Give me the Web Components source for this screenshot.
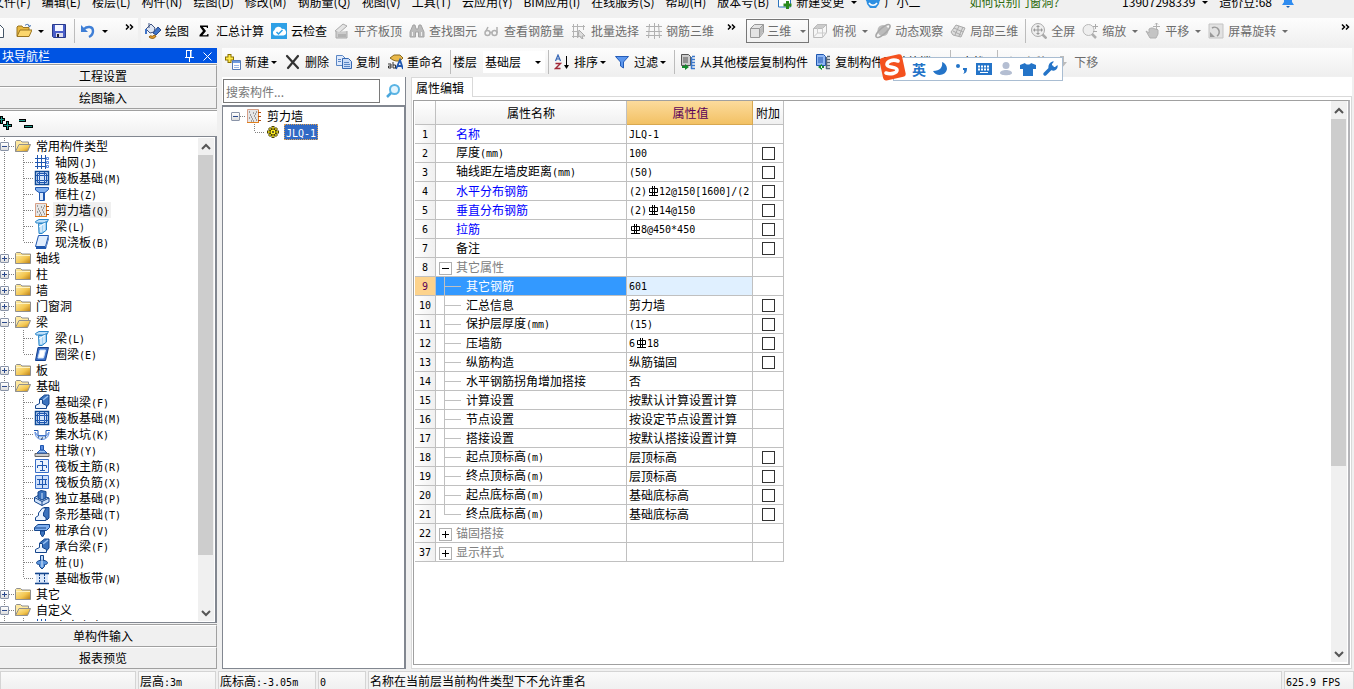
<!DOCTYPE html>
<html lang="zh-CN">
<head>
<meta charset="utf-8">
<title>钢筋算量 - 属性编辑</title>
<style>
html,body{margin:0;height:100%}
body{font:12px/16px "Noto Sans CJK SC",sans-serif;color:#000;background:#f0f0f0;overflow:hidden}
</style>
</head>
<body>
<estimator-app></estimator-app>
<script>
/* ---------- shared helpers ---------- */
const esc = s => s.replace(/&/g,'&amp;').replace(/</g,'&lt;');
// Latin runs use a half-width monospace face next to full-width Chinese glyphs.
const REBAR = '<svg class="rebar" viewBox="0 0 12 12" width="12" height="12" role="img" aria-label="钢筋符号"><path d="M5.500 1v10M7.500 1v10M3.500 3.500h-1v4h8v-4h-7M2 10.500h9" fill="none" stroke="#000"/></svg>';
const mix = s => esc(s).replace(/[\x20-\x25\x27-\x3a\x3d-\x7e]+/g, m => '<span class="n">'+m+'</span>').replace(/Φ/g, REBAR);
const MIX_CSS = '.n{font-family:"DejaVu Sans Mono",monospace;font-size:10px}.rebar{vertical-align:-2px}';
const BASE = ':host{box-sizing:border-box}*,*::before{box-sizing:border-box}button,input,select{font:inherit;color:inherit;margin:0}button{border:0;background:none;padding:0}:host([hidden]){display:none}';
function define(name, css, render){
  customElements.define(name, class extends HTMLElement{
    constructor(){ super(); this.attachShadow({mode:'open'}); }
    connectedCallback(){
      const html = typeof render === 'function' ? render(this) : render;
      this.shadowRoot.innerHTML = '<style>'+BASE+css+'</style>'+html;
    }
  });
}

/* ---------- icons ---------- */
const ICONS = {
  file:'<path d="M2.500 1.500h8l4 4v9h-12z" fill="#fff" stroke="#456"/>',
  open:'<path d="M1 13V4l1-1h4l1 1.500h6V7" fill="#e9b93f" stroke="#9a7420"/><path d="M1 13.500 4 7h12l-3 6.500z" fill="#fbd66c" stroke="#9a7420"/><path d="M9 2.500c2-2 4-1 4.500 1m0 0 1.500-1m-1.500 1L12 2.500" fill="none" stroke="#36a"/>',
  save:'<path d="M1.500 1.500h13v13h-12l-1-1z" fill="#4a5fc8" stroke="#283a8c"/><path d="M4 2h8v6H4z" fill="#f4f6ff"/><path d="M5 10h7v4H5z" fill="#dde"/><path d="M6 11h2v3H6z" fill="#223"/>',
  undo:'<path d="M4 6c3-3 9-3 9 2 0 3-2 5-4 6" fill="none" stroke="#3f7fd6" stroke-width="2.400"/><path d="M1 2v7h7z" fill="#3f7fd6"/>',
  draw:'<path d="m1 6 5-5 4 4-1 4-4 1z" fill="#dfe6f2" stroke="#3e5484"/><path d="M4 0v5" stroke="#3e5484"/><path d="m13 4 3 3-5 5-3-2z" fill="#3f74c9" stroke="#284a8c"/><path d="M4 14c2-3 3 1 5-2l2 1c-1 3-5 3-7 1z" fill="#eba028" stroke="#8a5a10"/><path d="M1 6v5" stroke="#3f74c9" stroke-width="2"/>',
  cloud:'<path d="M0 0h16v16H0z" fill="#2ea0e6"/><path d="M4 12.500a3 3 0 0 1-.500-5.500 4 4 0 0 1 7.500-1 3.300 3.300 0 0 1 1.500 6.500z" fill="#fff"/><path d="m5.500 9 2 2 4-4" fill="none" stroke="#2ea0e6" stroke-width="1.500"/>',
  sum:'<path d="M4 2.500h8V5h-1l-.500-1H6.800L10 8l-3.500 4.200h4.200L11.500 11h1v2.500H3.500V12L7 8 4 4z" fill="#000"/>',
  align:'<path d="m1 8 8-7 4 2-8 7z" fill="#e4e4e4" stroke="#aaa"/><path d="M2 9v6h11V8" fill="#ccc" stroke="#aaa"/><path d="M5 11v3m2-3v3m2-3v3m2-3v3" stroke="#999"/>',
  find:'<path d="M1 9 4 2h2l1 4h2l1-4h2l3 7v5H9.500V9h-3v5H1z" fill="#bbb" stroke="#a4a4a4"/><path d="M3.500 9v4m9-4v4" stroke="#eee"/>',
  view:'<g fill="none" stroke="#b0b0b0" stroke-width="1.500"><circle cx="3.500" cy="10" r="2.500"/><circle cx="10.500" cy="10" r="2.500"/><path d="M6 9.500h2M2 8l2-4m9 6V4"/></g>',
  batch:'<path d="M2.500 1v14M6.500 1v14M1 3.500h13M1 8.500h6M12.500 2v5M1 13.500h6" stroke="#b4b4b4" fill="none"/><path d="m8 7 6 6h-3l1 3-2-1-1-2-2 1z" fill="#ddd" stroke="#aaa"/>',
  mesh:'<path d="M3.500 1 2.500 15M8.500 0v16M12.500 1l1 14M0 3.500h16M0 8.500h16M0 12.500h16" stroke="#b0b0b0" fill="none"/>',
  cube:'<path d="m1.500 5.500 4-4h9v8l-4 5h-9z" fill="#e4e4e4" stroke="#999"/><path d="M1.500 5.500h9v9m0-9 4-4" fill="none" stroke="#999"/><path d="m11 6 3-3.500V9l-3 4z" fill="#bbb"/>',
  top:'<path d="m1.500 5.500 4-4h9v8l-4 5h-9z" fill="#f6f6f6" stroke="#bbb"/><path d="m1.500 5.500 4-4h9l-4 4z" fill="#ccc" stroke="#bbb"/><path d="M10.500 5.500v9M5.500 2v8m-4 4 4-4h9" fill="none" stroke="#ccc"/>',
  orbit:'<circle cx="8" cy="7.500" r="5.500" fill="#bcbcbc"/><ellipse cx="8" cy="8" rx="9" ry="3" transform="rotate(-42 8 8)" fill="none" stroke="#a8a8a8" stroke-width="1.500"/>',
  local:'<path d="m1 9 5-7 9 3-4 9-8-2z" fill="#ddd" stroke="#aaa"/><path d="m4 5 9 4M3 8l8 4M9 3l-4 9m8-8-4 9" stroke="#aaa"/>',
  full:'<circle cx="7" cy="7" r="6.500" fill="#eee" stroke="#aaa"/><path d="M7 2v10M2 7h10M5.500 3.500h3M3.500 5.500v3m7-3v3m-5 2h3" stroke="#999"/><path d="m11.500 11.500 4 4" stroke="#aaa" stroke-width="2.500"/>',
  zoom:'<circle cx="6.500" cy="7" r="5.500" fill="#eee" stroke="#b8b8b8"/><path d="m10 11 4 4" stroke="#b0b0b0" stroke-width="2.500"/><path d="M11 3.500h5M13.500 1v5M11 8.500h4" stroke="#aaa"/>',
  pan:'<path d="M1 8l3 2V6l2-1 2 0 2 1 2 0 1 1v4l-2 4H5z" fill="#c4c4c4" stroke="#b0b0b0"/><path d="M11.500 0v7M8 3.500h7M10 1.500 11.500 0 13 1.500" fill="none" stroke="#b0b0b0"/>',
  spin:'<path d="M1 1h14v14H1z" fill="#e2e2e2" stroke="#c4c4c4"/><path d="M4 5a4.500 4.500 0 1 1 5 8" fill="none" stroke="#999" stroke-width="1.500"/><path d="M2 9v5h5z" fill="#999"/>',
  add:'<path d="M4.500 0v9M0 4.500h9" stroke="#8a7000" stroke-width="4"/><path d="M4.500 1v7M1 4.500h7" stroke="#ffe94a" stroke-width="2"/><path d="M7.500 6.500h8v9h-8z" fill="#fff" stroke="#567bb5"/><path d="M8 7h7v2H8z" fill="#6f9be0"/><path d="M9 11.500h5m-5 2h5" stroke="#9bb8e8"/>',
  del:'<path d="m2 2 11 12M13 2 3 14" stroke="#333" stroke-width="2.200" stroke-linecap="round"/>',
  copy:'<path d="M.500 1.500h6l3 3v7h-9z" fill="#dfeafc" stroke="#5a86c4"/><path d="M6.500 4.500h6l3 3v7h-9z" fill="#c9dcf8" stroke="#3567b0"/><path d="M8 8.500h5m-5 2h6m-6 2h6M2 5.500h3m-3 2h3" stroke="#5a86c4"/>',
  rename:'<path d="m3 4 4-3h6l3 3-3 3H9L6 6z" fill="#eab94a" stroke="#8a6a20"/><path d="M9 15 13 6l3 9m-6-3h5" fill="none" stroke="#1f57b0" stroke-width="1.800"/><path d="M1 10h3v4H1.500v-2H4M6 8v6h2.500v-3H6" fill="none" stroke="#333"/>',
  sort:'<path d="m1.500 7 2.500-6 2.500 6M2.500 5h3" fill="none" stroke="#3465b5" stroke-width="1.200"/><path d="M1.500 9.500h5l-5 5h5" fill="none" stroke="#a02838" stroke-width="1.400"/><path d="M12.500 2v11" stroke="#000"/><path d="m10 11 2.500 4 2.500-4z"/>',
  filter:'<path d="M1.500 2.500h13L9.500 8v6l-3-2V8z" fill="#5c97ee" stroke="#245cb8"/>',
  fcopy:'<path d="M1.500.500h7l2 2v9h-9z" fill="#ccc" stroke="#555"/><path d="M3 4h5M3 6h5M3 8h5" stroke="#555"/><path d="m5 10 4 3-4 3zM2 12h4v2H2z" fill="#138a2b"/><path d="M12 2.500h3m-4 3h4m-4 3h4m-4 3h4m-4 3h4M11.500 3v12" stroke="#3b78cc" stroke-width="1.500"/>',
  fcopy2:'<path d="M1.500.500h7l2 2v9h-9z" fill="#8fb6f2" stroke="#1f57b0"/><path d="M3 4h5M3 6h5M3 8h5" stroke="#1f57b0"/><path d="m7 10-4 3 4 3zM6 12h3v2H6z" fill="#138a2b"/><path d="M12 2.500h3m-4 3h4m-4 3h4m-4 3h4m-4 3h4M11.500 3v12" stroke="#567" stroke-width="1.500"/>',
  arrow:'<path d="M8 2 3 8h3v6h4V8h3z" fill="#bbb"/>', arrowd:'<path d="m8 14 5-6h-3V2H6v6H3z" fill="#bbb"/>',
  change:'<path d="M1.500 0h10l2 3v10h-12z" fill="#fff" stroke="#2b74bd"/><path d="M10.500 7v8M6.500 11h8" stroke="#2a8a1a" stroke-width="3"/>',
  mascot:'<path d="M1 4h14l-1 6-3 4H5l-3-4z" fill="#2d8fe2"/><path d="M0 5h3v4zm16 0h-3v4z" fill="#2d8fe2"/><path d="M4 9c2 3 6 3 8 0" stroke="#fff" fill="none" stroke-width="1.500"/>',
  bell:'<path d="M4 3c0-4 8-4 8 0v5l2 3H2l2-3z" fill="#2f8cf0"/><path d="M6 12h4l-2 2z" fill="#1c5fae"/>',
  folder:'<path d="M.500 13.500v-10l1-1h4l1.500 1.500h8.500v9.500z" fill="url(#g)" stroke="#8f8f8f"/><path d="M1 5.500h14" stroke="#fff3c0"/>',
  folderopen:'<path d="M.500 13.500v-10l1-1h4L7 4h6.500v2.500" fill="#ffe9a0" stroke="#8f8f8f"/><path d="m.500 13.500 3.500-7h11.500l-3 7z" fill="url(#g)" stroke="#8f8f8f"/>',
  axis:'<path d="M3.500 1v14M7.500 1v14M1 4.500h11M1 8.500h11M1 12.500h11" stroke="#1f57b0" fill="none"/><path d="M11.500 1v14" stroke="#1f57b0"/><path d="M12.500 3.500h2v2h-2zm0 4h2v2h-2zm0 4h2v2h-2z" fill="#fff" stroke="#5a8ade"/>',
  raft:'<path d="M1.500 1.500h13v13h-13z" fill="#d4e6fb" stroke="#0f4a96" stroke-width="1.500"/><path d="M5.500 5.500h5v5h-5zM5.500 2v3m5-3v3m-5 6v3m5-3v3M2 5.500h3m-3 5h3m6-5h3m-3 5h3M3.500 3.500h9v9h-9z" fill="none" stroke="#1f57b0"/>',
  column:'<path d="M1.500 1.500h13v2L11 6.500H5L1.500 4z" fill="#7fb0f0" stroke="#1f57b0"/><path d="M5.500 6.500h5v8h-5z" fill="#d9e8fc" stroke="#1f57b0"/><path d="M9.500 7v7" stroke="#1f57b0"/>',
  wall:'<path d="M1.500 1.500h11v13h-11z" fill="#e6e6e6" stroke="#d8a088"/><path d="M3 4h1m3 1h1m2-1h1M4 7h1m3 1h1M3 10h1m2 1h1m3 1h1M5 13h1m3-3h1M5 9h1m1 4h1m1-7h1" stroke="#555"/><path d="M1 14.500h11M12.500 2v13" stroke="#e08020"/><path d="M12 4.500h3m-3 4h3m-3 4h3" stroke="#b04c10"/>',
  beam:'<path d="M1.500 3.500 5 1.500h9.500l-2 3.500H2z" fill="#bfe0fa" stroke="#2a86c8"/><path d="M4.500 5.500h4l4-2V12L8 15.500H5z" fill="#9fd0f4" stroke="#2a86c8"/><path d="M7 7v7m3-8v7M5 9l6-4" stroke="#fff"/>',
  slab:'<path d="M4.500 1.500h10l-3 11h-10z" fill="#e2eefd" stroke="#1f57b0"/><path d="M2 13h10l3-11v2.500l-3 10.500H2z" fill="#1f57b0"/>',
  ring:'<path d="M4 1.500h10.500l-3 13H1.500z" fill="#3a6fc8" stroke="#143f8c"/><path d="M6 4h5.500l-2 8H4z" fill="#fff" stroke="#cfe2fa"/>',
  fbeam:'<path d="M5.500 7.500V5l5-4h4.500v9l-2.500 3" fill="#3a72bd" stroke="#14458c"/><path d="M1.500 14.500v-3l4-2v-4h3v4l4 2v3z" fill="#eaf3ff" stroke="#14458c"/><path d="m9 6 5-4" stroke="#9cc4f4" stroke-width="1.500"/>',
  pit:'<path d="M0 4.500h4v5h8v-5h4" fill="none" stroke="#1f57b0"/><path d="M1 6c0 10 14 10 14 0l-3 4H4z" fill="#cfe2fa" stroke="#5a8ade"/><path d="M4 11h1m3 1h1m2-1h1m-5 2h1" stroke="#123"/>',
  pier:'<path d="M1 11.500h14v3H1z" fill="#ccc" stroke="#666"/><path d="m3 11 3-3h4l3 3z" fill="#9cc4f4" stroke="#1f57b0"/><path d="M6.500 3.500h3V8h-3z" fill="#5a8ade" stroke="#1f57b0"/>',
  rmain:'<path d="M1.500 1.500h13v13h-13z" fill="#eaf2fd" stroke="#3a6fc8"/><path d="M8.500 3v10M3.500 10V7.500h9V10M6 12.500h5M6 3.500h3" fill="none" stroke="#1f57b0"/>',
  rneg:'<path d="M1.500 1.500h13v13h-13z" fill="#cfe0fa" stroke="#3a6fc8"/><path d="M8.500 2v12M3 5.500h10M3 10.500h10M5.500 5v6M11.500 5v6" fill="none" stroke="#1f57b0"/>',
  iso:'<path d="M.500 7.500 5 5l10 3v4l-7 3.500-7.500-4z" fill="#cfe2fa" stroke="#14458c"/><path d="M.500 7.500 8 11.500l7-3.500M8 11.500v4" fill="none" stroke="#14458c"/><path d="m4 2 3-1.500 5 1V8L8 10 4 8z" fill="#3a72bd" stroke="#14458c"/><path d="M8 3v6" stroke="#cfe2fa"/>',
  strip:'<path d="M7 5.500 10 1.500h5V12l-2 2z" fill="#3a72bd" stroke="#14458c"/><path d="M1.500 14.500v-3l3-2V7l4-5H12L9.500 7v3l2.500 1.500v3z" fill="#eaf3ff" stroke="#14458c"/>',
  cap:'<path d="M.500 5.500 4 2.500h11.500v3l-3 3H.500z" fill="#7fb0f0" stroke="#14458c"/><path d="M1 6h11" stroke="#14458c"/><path d="M6.500 9h4v3l-2 3-2-3z" fill="#3a72bd" stroke="#14458c"/>',
  pile:'<path d="M6.500 1.500h3v5h-3z" fill="#9cc4f4" stroke="#14458c"/><path d="M2.500 8.500c1-3 10-3 11 0 0 2-2 2-3 2v2L8 15l-2.500-2.500v-2c-1 0-3 0-3-2z" fill="#5a94dc" stroke="#14458c"/><path d="M8 2v11" stroke="#dcecff"/>',
  band:'<path d="M2 2h12v12H2z" fill="#dbe8fb"/><path d="M1 3.500h14M1 13.500h14" stroke="#14458c" stroke-width="1.500"/><path d="M5.500 4v9m5-9v9" stroke="#14458c" stroke-dasharray="2 1"/>',
  gear:'<path d="M8 2v12M2 8h12M4 4l8 8M12 4l-8 8" stroke="#4a4200" stroke-width="3"/><path d="M8 3v10M3 8h10M4.500 4.500l7 7m0-7-7 7" stroke="#ffee20" stroke-width="1.500"/><circle cx="8" cy="8" r="3" fill="#ffee20" stroke="#4a4200"/><circle cx="8" cy="8" r="1" fill="#333"/>',
  search:'<circle cx="9.500" cy="6.500" r="4.500" fill="#e4f5fe" stroke="#5ab4e4" stroke-width="2"/><path d="m6 10-4 4" stroke="#4aa6dc" stroke-width="2.500"/>',
  pin:'<path d="M5 2.500h6M5.500 2v7M10 2v7M4 9.500h9M8.500 9v5" fill="none" stroke="#fff"/><path d="M9 3h1v6H9z" fill="#fff"/>',
  close:'<path d="m4.500 4.500 8 8m0-8-8 8" stroke="#fff"/>',
  plus2:'<path d="M1.500 0v8M-2 3.500h7M7.500 5v9M3 9.500h9" stroke="#000" stroke-width="3"/><path d="M1.500 1v6M-1 3.500h5M7.500 6v7M4 9.500h7" stroke="#1f9a88"/>',
  minus2:'<path d="M-2 4.500h9M5 10.500h9" stroke="#000" stroke-width="3"/><path d="M-1 4.500h7M6 10.500h7" stroke="#1f9a88"/>',
  moon:'<path d="M10 1c1 5-2 9-9 9 3 6 13 5 14-2 0-3-2-6-5-7z" fill="#2474c8"/>',
  dots:'<circle cx="4" cy="5" r="2" fill="#2474c8"/><path d="M9 7h4c0 4-1 5-4 6 2-2 1-3 1-4h-1z" fill="#2474c8"/>',
  keys:'<path d="M0 2h16v12H0z" fill="#2474c8"/><path d="M2 5.500h12M2 8.500h12" stroke="#fff" stroke-width="2" stroke-dasharray="2 1"/><path d="M4 11.500h8" stroke="#fff"/>',
  user:'<circle cx="8" cy="4.500" r="3.500" fill="#b4bed2"/><path d="M2 12c0-4 12-4 12 0 0 3-12 3-12 0z" fill="#b4bed2"/>',
  shirt:'<path d="M5 2c1 2 5 2 6 0l5 2v4h-3v7H3V8H0V4z" fill="#2474c8"/>',
  wrench:'<path d="m3 13 7-7" stroke="#2474c8" stroke-width="3.500" stroke-linecap="round"/><path d="M12 .500 10 3v3h3l2.500-2C16.500 8 13 11 9 9L6.500 7C6 3 9 0 12 .500z" fill="#2474c8"/>',
  up:'<path d="m4 10 4-4 4 4" fill="none" stroke="#555" stroke-width="2"/>',
  down:'<path d="m4 6 4 4 4-4" fill="none" stroke="#555" stroke-width="2"/>',
  more:'<path d="m4 5.500 2.500 2.500L4 10.500M8 5.500l2.500 2.500L8 10.500" fill="none" stroke="#000" stroke-width="1.500"/>'
};
define('app-icon', ':host{display:block;width:16px;height:16px;flex:none}svg{display:block;overflow:hidden}',
  h => '<svg viewBox="0 0 16 16" width="16" height="16" aria-hidden="true"><defs><linearGradient id="g" x1="0" y1="0" x2="1" y2="1"><stop offset="0" stop-color="#fff0b0"/><stop offset=".6" stop-color="#f3c650"/><stop offset="1" stop-color="#b87c14"/></linearGradient></defs>'+(ICONS[h.getAttribute('name')]||'')+'</svg>');

/* ---------- toolbars ---------- */
define('tool-button', `:host{display:block;flex:none}
button{display:flex;align-items:center;gap:4px;height:24px;padding:0 4px 0 3px;white-space:nowrap}
:host([boxed]) button{border:1px solid #777;padding:0 2px;gap:2px}
:host([boxed]) .c{width:15px;margin-left:-2px}
:host([off]) button{color:#6d6d6d}
.c{width:var(--caret,12px);margin-left:-4px;display:flex;justify-content:var(--caret-side,flex-end)}
.c::before{content:"";border:3px solid transparent;border-top-color:currentColor;border-bottom:0}`,
  h => `<button type="button" aria-label="${h.getAttribute('label')||h.textContent}">${h.hasAttribute('icon')?`<app-icon name="${h.getAttribute('icon')}"></app-icon>`:''}${h.textContent?'<span><slot></slot></span>':''}${h.hasAttribute('menu')?'<span class="c"></span>':''}</button>`);
define('tool-sep', ':host{display:block;flex:none;width:1px;height:24px;background:#bcbcbc;margin:0 2px 0 3px}', '');
define('tool-strip', ':host{display:flex;align-items:center;height:29px;background:linear-gradient(#fdfdfd,#efefef);overflow:hidden}', '<slot></slot>');

/* ---------- menu bar ---------- */
define('menu-bar', `:host{display:block;height:18px;overflow:hidden;background:#f0f0f0}
nav{display:flex;align-items:center;height:20px;margin:-8px 0 0 -8px;gap:11px;white-space:nowrap}
button{flex:none;display:flex;align-items:center;gap:3px}
.c{border:3px solid transparent;border-top-color:#000;border-bottom:0;margin-left:4px}
.tip{color:#2c6a0c;margin-left:38px}.acct{margin-left:52px}app-icon{margin:0 -8px 0 -3px}`,
  '<nav>'+['文件(F)','编辑(E)','楼层(L)','构件(N)','绘图(D)','修改(M)','钢筋量(Q)','视图(V)','工具(T)','云应用(Y)','BIM应用(I)','在线服务(S)','帮助(H)','版本号(B)'].map(t=>`<button type="button">${t}</button>`).join('')+
  '<app-icon name="change"></app-icon><button type="button">新建变更 <span class="c"></span></button><app-icon name="mascot"></app-icon><button type="button">广小二</button><button type="button" class="tip">如何识别门窗洞?</button><button type="button" class="acct">13907298339 <span class="c"></span></button><button type="button">造价豆:68</button><app-icon name="bell"></app-icon></nav>');

/* ---------- scroll rail ---------- */
define('scroll-rail', `:host{display:flex;flex-direction:column;width:16px;flex:none;background:#f0f0f0}
button{height:17px;flex:none}.t{flex:1;min-height:0}.t i{display:block;height:var(--thumb,50%);background:#cdcdcd;margin-right:1px}`,
  '<button type="button" aria-label="向上"><app-icon name="up"></app-icon></button><div class="t"><i></i></div><button type="button" aria-label="向下"><app-icon name="down"></app-icon></button>');

/* ---------- tree rows ---------- */
define('tree-row', MIX_CSS+`:host{display:flex;height:16px;align-items:center;white-space:nowrap;--v:repeating-linear-gradient(#808080 0 1px,transparent 1px 2px);--h:repeating-linear-gradient(90deg,#808080 0 1px,transparent 1px 2px)}
.g{flex:none;height:16px;background-repeat:no-repeat;display:flex;align-items:center}
.a{width:15px;background-image:var(--v),var(--h);background-size:1px 100%,6px 1px;background-position:4px 0,9px 8px}
:host([sub]) .a{background-image:var(--v)}
:host([bare]) .a{background-image:var(--h);background-size:6px 1px;background-position:9px 8px}
:host([bare][sub]) .a{background-image:none}
.b{width:19px;background-image:var(--v),var(--h);background-size:1px 100%,10px 1px;background-position:8px 0,9px 8px}
:host([last]) .b{background-size:1px 8px,10px 1px}
.x{width:9px;height:9px;border:1px solid #8a94a8;border-radius:1px;background:linear-gradient(#2c4a8c,#2c4a8c) 50%/5px 1px no-repeat,linear-gradient(#fff,#ddd)}
.x[aria-expanded=false]{background:linear-gradient(#2c4a8c,#2c4a8c) 50%/5px 1px no-repeat,linear-gradient(#2c4a8c,#2c4a8c) 50%/1px 5px no-repeat,linear-gradient(#fff,#ddd)}
.l{padding:0 2px;margin-left:3px;line-height:16px;height:16px}
:host([current]) .l{background:#f0f0f0}
:host([picked]) .l{background:#316ac5;color:#fff;outline:1px dotted #e0a050;outline-offset:-1px}`,
  h => { const sub=h.hasAttribute('sub'), ex=h.getAttribute('open');
    return `<span class="g a">${sub?'':`<button type="button" class="x" aria-label="展开或折叠" aria-expanded="${ex}"></button>`}</span>${sub?'<span class="g b"></span>':''}<app-icon name="${h.getAttribute('icon')||(ex==='true'?'folderopen':'folder')}"></app-icon><span class="l">${mix(h.getAttribute('label'))}</span>`; });

/* ---------- left navigation ---------- */
const NAV = [['常用构件类型',[['轴网(J)','axis'],['筏板基础(M)','raft'],['框柱(Z)','column'],['剪力墙(Q)','wall',1],['梁(L)','beam'],['现浇板(B)','slab']]],
 ['轴线'],['柱'],['墙'],['门窗洞'],['梁',[['梁(L)','beam'],['圈梁(E)','ring']]],['板'],
 ['基础',[['基础梁(F)','fbeam'],['筏板基础(M)','raft'],['集水坑(K)','pit'],['柱墩(Y)','pier'],['筏板主筋(R)','rmain'],['筏板负筋(X)','rneg'],['独立基础(P)','iso'],['条形基础(T)','strip'],['桩承台(V)','cap'],['承台梁(F)','fbeam'],['桩(U)','pile'],['基础板带(W)','band']]],
 ['其它'],['自定义',[['自定义点','axis']]]];
const navRows = NAV.map(([t,kids]) => `<tree-row label="${t}" open="${!!kids}"></tree-row>`+(kids||[]).map(([l,i,c],k)=>`<tree-row sub label="${l}" icon="${i}"${c?' current':''}${k===kids.length-1?' last':''}></tree-row>`).join('')).join('');
define('nav-panel', `:host{display:flex;flex-direction:column;width:217px;flex:none;min-height:0}
header{display:flex;align-items:center;height:15px;background:#0054e3;color:#fff;padding-left:2px;margin:0 0 2px}
header span{flex:1}header button{width:18px;height:15px}
.s{height:22px;flex:none;border:1px solid #a0a0a0;border-width:1px 1px 1px 0;border-top-color:#fff;box-shadow:0 -1px #a0a0a0;padding-right:10px;text-align:center}
.bar{display:flex;align-items:center;gap:3px;height:26px;flex:none;background:linear-gradient(#fff,#f0f0f0);border-top:1px solid #a0a0a0;margin-top:1px}
.tree{flex:1;min-height:0;display:flex;background:#fff;border:1px solid #828790;border-width:1px 2px 1px 0;padding:1px 1px 1px 0;margin-bottom:2px}
.rows{flex:1;overflow:hidden}scroll-rail{--thumb:89%}`,
  `<header><span>块导航栏</span><button type="button" aria-label="固定"><app-icon name="pin"></app-icon></button><button type="button" aria-label="关闭"><app-icon name="close"></app-icon></button></header>
  <button type="button" class="s">工程设置</button><button type="button" class="s">绘图输入</button>
  <div class="bar"><app-icon name="plus2"></app-icon><app-icon name="minus2"></app-icon></div>
  <div class="tree"><div class="rows">${navRows}</div><scroll-rail></scroll-rail></div>
  <button type="button" class="s">单构件输入</button><button type="button" class="s">报表预览</button>`);

/* ---------- component list ---------- */
define('component-panel', `:host{display:flex;flex-direction:column;width:184px;flex:none;background:#fff;border-right:1px solid #828790;padding-top:1px}
form{display:flex;height:27px;padding-left:1px;margin:0;flex:none;align-items:flex-start;padding-top:1px}
input{width:157px;height:24px;border:1px solid #7a7a7a;background:#fff;padding:0 2px;border-radius:0}input::placeholder{color:#777;opacity:1}
form button{flex:1;height:24px;display:flex;align-items:center;justify-content:center}
.t{flex:1;border:1px solid #828790;border-top-width:2px;padding:1px 0 0 8px}`,
  `<form><input type="text" aria-label="搜索构件" placeholder="搜索构件..."><button type="button" aria-label="搜索"><app-icon name="search"></app-icon></button></form>
  <div class="t"><tree-row bare open="true" icon="wall" label="剪力墙"></tree-row><tree-row bare sub last picked icon="gear" label="JLQ-1"></tree-row></div>`);

/* ---------- property grid: [no, name, value, checkbox, kind] ---------- */
const PROPS = [[1,'名称','JLQ-1',0,'key'],[2,'厚度(mm)','100',1],[3,'轴线距左墙皮距离(mm)','(50)',1],[4,'水平分布钢筋','(2)Φ12@150[1600]/(2',1,'key'],[5,'垂直分布钢筋','(2)Φ14@150',1,'key'],[6,'拉筋','Φ8@450*450',1,'key'],[7,'备注','',1],
 [8,'其它属性','',0,'grp open'],[9,'其它钢筋','601',0,'sub sel'],[10,'汇总信息','剪力墙',1,'sub'],[11,'保护层厚度(mm)','(15)',1,'sub'],[12,'压墙筋','6Φ18',1,'sub'],[13,'纵筋构造','纵筋锚固',1,'sub'],[14,'水平钢筋拐角增加搭接','否',0,'sub'],[15,'计算设置','按默认计算设置计算',0,'sub'],[16,'节点设置','按设定节点设置计算',0,'sub'],[17,'搭接设置','按默认搭接设置计算',0,'sub'],[18,'起点顶标高(m)','层顶标高',1,'sub'],[19,'终点顶标高(m)','层顶标高',1,'sub'],[20,'起点底标高(m)','基础底标高',1,'sub'],[21,'终点底标高(m)','基础底标高',1,'sub end'],[22,'锚固搭接','',0,'grp'],[37,'显示样式','',0,'grp']];
define('property-grid', MIX_CSS+`:host{display:flex;flex:1;min-height:0;background:#fff;border:1px solid #a0a0a0;border-right:2px solid #b4b4b8;padding:0 1px 2px 1px}
.w{flex:1;min-width:0;overflow:hidden}scroll-rail{--thumb:66%;padding-top:1px}
table{border-collapse:separate;border-spacing:0;table-layout:fixed;width:369px}
th,td{border:0 solid #c0c0c0;border-width:0 1px 1px 0;padding:0;font-weight:400;height:19px;line-height:16px;white-space:nowrap;overflow:hidden;text-align:left}
thead th{height:24px;text-align:center;background:linear-gradient(#fff,#f0f0f0)}
thead th.v{background:linear-gradient(#fcdb9c,#f2c164);color:#5a0058;border-color:#d8a850}
tbody th:first-child{text-align:center;background:linear-gradient(90deg,#fff,#f0f0f0)}
.name{padding-left:20px}.v{padding-left:2px}
.key .name{color:#00f}.grp .name{color:#808080}
.sub .name{padding-left:30px;background:linear-gradient(#c0c0c0,#c0c0c0) 8px 0/1px 19px no-repeat,linear-gradient(#c0c0c0,#c0c0c0) 9px 9px/16px 1px no-repeat}
.end .name{background-size:1px 10px,16px 1px}
.sel .name{background-color:#39f;color:#fff}.sel .v{background:#e0f0ff}.sel th:first-child{background:#fdd38c!important;color:#5a0058}
.tg{display:inline-block;vertical-align:middle;width:13px;height:13px;margin:0 4px 0 -17px;border:1px solid #b0b0b0;background:linear-gradient(#000,#000) 50%/7px 1px no-repeat}
.tg[aria-expanded=false]{background:linear-gradient(#000,#000) 50%/7px 1px no-repeat,linear-gradient(#000,#000) 50%/1px 7px no-repeat}
input{appearance:none;display:block;width:13px;height:13px;border:1px solid #333;margin:0 auto;background:#fff}`,
  `<div class="w"><table><colgroup><col style="width:21px"><col style="width:191px"><col style="width:126px"><col style="width:31px"></colgroup>
  <thead><tr><th></th><th scope="col">属性名称</th><th scope="col" class="v">属性值</th><th scope="col">附加</th></tr></thead><tbody>`+
  PROPS.map(([n,a,v,c,k=''])=>`<tr class="${k}"><th scope="row">${mix(''+n)}</th><td class="name">${k.includes('grp')?`<button type="button" class="tg" aria-label="展开或折叠" aria-expanded="${k.includes('open')}"></button>`:''}${mix(a)}</td><td class="v">${mix(v)}</td><td>${c?`<input type="checkbox" aria-label="附加 ${a}">`:''}</td></tr>`).join('')+
  '</tbody></table></div><scroll-rail></scroll-rail>');
define('tab-panel', `:host{display:flex;flex-direction:column;flex:1;min-width:0;background:#fff;border-left:1px solid #d9d9d9}
.tabs{display:flex;height:20px;flex:none}.tabs button{width:61px;padding-left:4px;text-align:left;border:1px solid #d9d9d9;border-width:1px 1px 0 0;background:#fff}.tabs i{flex:1;border-bottom:1px solid #d9d9d9}
.body{flex:1;display:flex;min-height:0;padding:3px 1px 3px;border:0 solid #d9d9d9;border-width:0 1px 1px 0}`,
  '<div class="tabs" role="tablist"><button type="button" role="tab" aria-selected="true">属性编辑</button><i></i></div><div class="body"><slot></slot></div>');

/* ---------- status bar ---------- */
define('status-bar', MIX_CSS+`:host{display:flex;gap:2px;height:18px;flex:none;overflow:hidden;white-space:nowrap}
span.c{flex:none;border:1px solid #d4d4d4;border-bottom:0;padding:1px 1px 0;background:linear-gradient(#fafafa,#f0f0f0)}span.c:nth-of-type(5){flex:1}`,
  [['',136],['层高:3m',78],['底标高:-3.05m',98],['0',48],['名称在当前层当前构件类型下不允许重名',0],['625.9 FPS',70]].map(([t,w])=>`<span class="c"${w?` style="width:${w}px"`:''}>${mix(t)}</span>`).join(''));

/* ---------- floating input-method bar ---------- */
define('ime-bar', `:host{position:absolute;left:879px;top:53px;display:flex;align-items:center}
.b{display:flex;align-items:center;gap:6px;height:24px;border:1px solid #a9bdd2;background:#fff;padding:0 4px 0 18px;margin:4px 0 0 -13px;color:#2474c8;font-weight:700;font-size:14px}
.logo{position:relative;z-index:1;flex:none}`,
  `<svg class="logo" width="27" height="28" viewBox="0 0 27 28" aria-label="输入法" role="img"><rect x="2" y="3" width="23" height="23" rx="3" transform="rotate(-12 13 14)" fill="#f4511e"/><path d="M19 8C14 6 8 8 8 11.500s10 2 10 5.500-7 4.500-11 3" fill="none" stroke="#fff" stroke-width="3.600" stroke-linecap="round"/></svg>
  <div class="b"><button type="button">英</button>${['moon','dots','keys','user','shirt','wrench'].map(i=>`<app-icon name="${i}"></app-icon>`).join('')}</div>`);

/* ---------- page ---------- */
define('estimator-app', `:host{display:flex;flex-direction:column;height:100vh;min-height:400px;overflow:hidden;position:relative}
.row{display:flex;gap:3px;height:30px;flex:none}.row tool-strip{padding-bottom:3px}.file{width:138px;flex:none}.file tool-button:first-child{margin:0 4px 0 -14px}
.end{margin-left:auto}.grow{flex:1;min-width:0}.ops{padding-left:1px}.views{margin-left:-3px;padding-left:6px}
main{display:flex;gap:5px;flex:1;min-height:0;padding:0 2px 2px 0}.right{flex:1;min-width:0;display:flex;flex-direction:column}
.edit{--caret:9px;--caret-side:center;height:28px;flex:none}.panes{flex:1;display:flex;gap:5px;min-height:0;margin-top:1px}
label{flex:none}select{appearance:none;width:62px;height:22px;border:0;border-radius:0;background:#fff;padding:0 2px;display:block}
.sel{position:relative;margin:0 0 0 6px;flex:none}.sel::after{content:"";position:absolute;right:4px;top:10px;border:3px solid transparent;border-top-color:#000;border-bottom:0}
.seek{margin:0 5px}.more{margin-left:6px}.more,.end{margin-bottom:8px}`,
  `<menu-bar></menu-bar>
  <div class="row"><tool-strip class="file"><tool-button icon="file" label="新建"></tool-button><tool-button icon="open" label="打开" menu></tool-button><tool-button icon="save" label="保存"></tool-button><tool-sep></tool-sep><tool-button icon="undo" label="撤销" menu></tool-button><app-icon class="end" name="more"></app-icon></tool-strip>
  <tool-strip class="ops"><tool-button icon="draw">绘图</tool-button><tool-button icon="sum">汇总计算</tool-button><tool-button icon="cloud">云检查</tool-button><tool-button off icon="align">平齐板顶</tool-button><tool-button off icon="find">查找图元</tool-button><tool-button off icon="view">查看钢筋量</tool-button><tool-button off icon="batch">批量选择</tool-button><tool-button off icon="mesh">钢筋三维</tool-button><app-icon class="more" name="more"></app-icon></tool-strip>
  <tool-strip class="views grow"><tool-button off boxed icon="cube" menu>三维</tool-button><tool-button off icon="top" menu>俯视</tool-button><tool-button off icon="orbit">动态观察</tool-button><tool-button off icon="local">局部三维</tool-button><tool-sep></tool-sep><tool-button off icon="full">全屏</tool-button><tool-button off icon="zoom" menu>缩放</tool-button><tool-button off icon="pan" menu>平移</tool-button><tool-button off icon="spin" menu>屏幕旋转</tool-button><app-icon class="end" name="more"></app-icon></tool-strip></div>
  <main><nav-panel></nav-panel><div class="right">
  <tool-strip class="edit"><tool-button icon="add" menu>新建</tool-button><tool-button icon="del">删除</tool-button><tool-button icon="copy">复制</tool-button><tool-button icon="rename">重命名</tool-button><tool-sep></tool-sep><label for="floor">楼层</label><span class="sel"><select id="floor"><option>基础层</option></select></span><tool-sep></tool-sep><tool-button icon="sort" menu>排序</tool-button><tool-button icon="filter" menu>过滤</tool-button><tool-sep></tool-sep><tool-button icon="fcopy">从其他楼层复制构件</tool-button><tool-button icon="fcopy2">复制构件到其他楼层</tool-button><tool-sep></tool-sep><tool-button class="seek">查找</tool-button><tool-sep></tool-sep><tool-button off icon="arrow">上移</tool-button><tool-button off icon="arrowd">下移</tool-button></tool-strip>
  <div class="panes"><component-panel></component-panel><tab-panel><property-grid></property-grid></tab-panel></div></div></main>
  <status-bar></status-bar><ime-bar></ime-bar>`);
</script>
</body>
</html>
